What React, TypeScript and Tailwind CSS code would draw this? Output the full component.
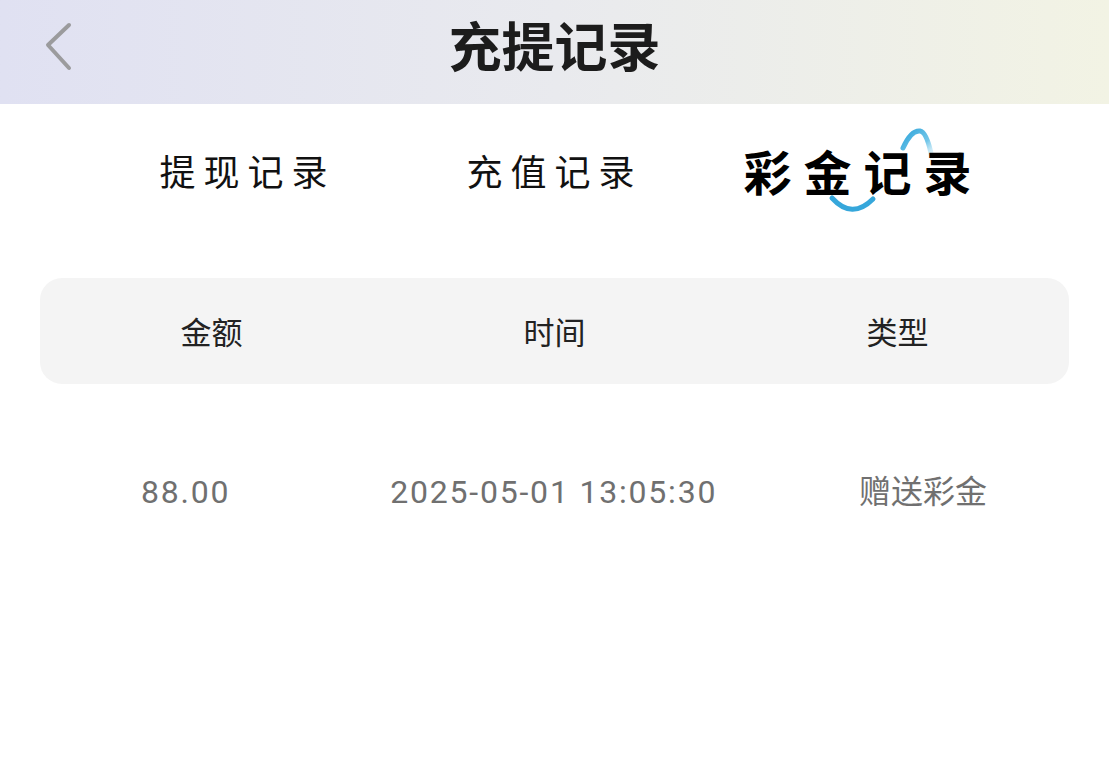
import React from "react";

const tabs = ["提现记录", "充值记录", "彩金记录"];

const records = [
  { amount: "88.00", time: "2025-05-01 13:05:30", type: "赠送彩金" },
];

const Swoosh = () => (
  <svg
    className="absolute left-[82px] top-[-20px] pointer-events-none"
    width="120"
    height="100"
    viewBox="0 0 120 100"
    fill="none"
  >
    <defs>
      <linearGradient id="fade" x1="0" y1="0" x2="1" y2="1">
        <stop offset="0" stopColor="#2ea4da" />
        <stop offset="0.6" stopColor="#4fb8e3" stopOpacity="0.8" />
        <stop offset="1" stopColor="#8fd2ee" stopOpacity="0.1" />
      </linearGradient>
    </defs>
    {/* bottom smile */}
    <path d="M7 72 Q27 94 48 73" stroke="#36a7db" strokeWidth="5" strokeLinecap="round" />
    {/* top hook */}
    <path d="M78 22 Q86 4 95 5 Q102 6 107 32" stroke="url(#fade)" strokeWidth="5" strokeLinecap="round" />
  </svg>
);

export default function App() {
  const active = 2;

  return (
    <div className="min-h-screen w-full bg-white font-['Noto_Sans_CJK_SC',sans-serif]">
      {/* header */}
      <div className="relative flex h-[104px] items-center justify-center bg-gradient-to-r from-[#e0e1f2] via-[#e9eaee] to-[#f2f3e4] pb-[16px]">
        <svg className="absolute left-[42px] top-[20px]" width="32" height="52" viewBox="0 0 32 52" fill="none">
          <path d="M27 5 L6 25 L27 48" stroke="#9b9b9d" strokeWidth="4" strokeLinecap="round" strokeLinejoin="round" />
        </svg>
        <h1 className="text-[53px] font-bold leading-none text-[#1c1c1c]">充提记录</h1>
      </div>

      {/* tabs */}
      <div className="grid h-[132px] grid-cols-3 items-center pl-[90px] pr-[98px]">
        {tabs.map((t, i) => (
          <div key={t} className="flex justify-center">
            {i === active ? (
              <span className="relative -mr-[12px] text-[48px] font-bold leading-none tracking-[12px] text-black">
                <Swoosh />
                <span className="relative">{t}</span>
              </span>
            ) : (
              <span className="-mr-[8px] text-[36px] leading-none tracking-[8px] text-[#111]">{t}</span>
            )}
          </div>
        ))}
      </div>

      {/* table head */}
      <div className="mx-[40px] mt-[42px] grid h-[106px] grid-cols-3 items-center rounded-[22px] bg-[#f4f4f4] text-center text-[31px] text-[#222]">
        <div>金额</div>
        <div>时间</div>
        <div>类型</div>
      </div>

      {/* rows */}
      {records.map((r) => (
        <div
          key={r.time}
          className="flex h-[216px] items-center justify-between pl-[141px] pr-[122px] font-['Roboto','Noto_Sans_CJK_SC',sans-serif] text-[32px] text-[#707070]"
        >
          <span className="tracking-[1.8px]">{r.amount}</span>
          <span className="ml-[18px] tracking-[1.8px]">{r.time}</span>
          <span>{r.type}</span>
        </div>
      ))}
    </div>
  );
}
